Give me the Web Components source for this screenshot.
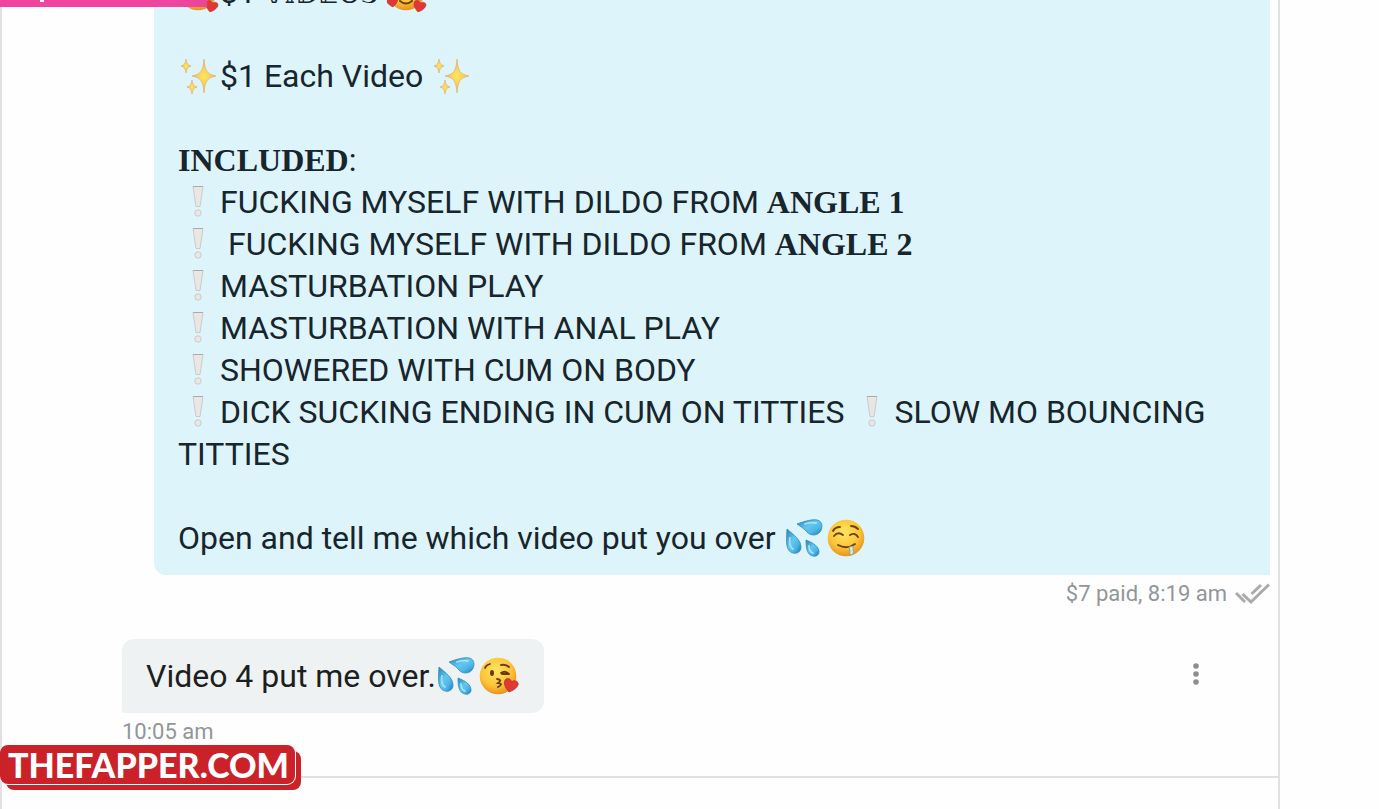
<!DOCTYPE html>
<html lang="en">
<head>
<meta charset="utf-8">
<title>Messages</title>
<style>
  body {
    margin: 0;
    background: #fefefe;
    color: #17252c;
    font-family: Roboto, "Liberation Sans", sans-serif;
  }
  .outgoing {
    margin-left: 152px;
  }
  .incoming {
    margin-left: 120px;
  }
  b {
    font-family: "Liberation Serif", serif;
    line-height: 1;
  }
  .outline {
    font-family: "DejaVu Sans", sans-serif;
    font-size: 28px;
    line-height: 1;
  }
</style>
</head>
<body>

<template id="chat-page">
  <style>
    :host {
      display: block;
      position: relative;
      height: 100vh;
      overflow: hidden;
    }
    .column {
      display: flex;
      flex-direction: column;
      box-sizing: border-box;
      height: 100%;
      margin-right: 99px;
      border: solid #dfe1e3;
      border-width: 0 2px 0 2px;
    }
    main {
      flex: 1;
      min-height: 0;
      display: flex;
      flex-direction: column;
      justify-content: flex-end;
      gap: 32px;
      padding: 0 8px 31px 0;
    }
    footer {
      height: 31px;
      flex: none;
      border-top: 2px solid #dfe1e3;
    }
  </style>
  <div class="column">
    <main><slot></slot></main>
    <footer></footer>
  </div>
  <slot name="over"></slot>
</template>

<template id="chat-message">
  <style>
    :host {
      display: flex;
      flex-direction: column;
      gap: 6px;
      flex: none;
    }
    .row {
      display: flex;
      align-items: center;
      justify-content: space-between;
    }
    .bubble {
      padding: 16px 24px;
      border-radius: 12px 12px 12px 2px;
      background: #eff2f3;
      color: #1c1f21;
      font-size: 32px;
      line-height: 42px;
      white-space: pre-wrap;
    }
    .meta {
      display: flex;
      align-items: center;
      gap: 8px;
      color: #919698;
      font-size: 22px;
      line-height: 26px;
    }
    :host([own]) .bubble {
      flex: 1;
      border-radius: 12px 12px 0 12px;
      background: #def4fb;
      color: inherit;
    }
    :host([own]) .meta {
      justify-content: flex-end;
    }
  </style>
  <div class="row">
    <div class="bubble"><slot></slot></div>
    <slot name="action"></slot>
  </div>
  <div class="meta"><slot name="meta"></slot></div>
</template>

<template id="read-ticks">
  <style>
    :host { display: block; height: 22px; }
    svg { display: block; }
  </style>
  <svg width="35" height="22" viewBox="0 0 35 22" fill="none" stroke="#a8aaab" stroke-width="3">
    <path d="M1 10l9 9M7.500 11l8.500 8L34 1.500M16.500 11L26 2"/>
  </svg>
</template>

<template id="more-button">
  <style>
    :host { display: block; margin-right: 54px; }
    button {
      display: block;
      padding: 4px 8px 8px;
      border: 0;
      background: none;
    }
    svg { display: block; }
  </style>
  <button type="button" aria-label="More">
    <svg width="24" height="24" viewBox="0 0 24 24" fill="#8e8e8e">
      <circle cx="12" cy="4" r="2.800"/><circle cx="12" cy="12" r="2.800"/><circle cx="12" cy="20" r="2.800"/>
    </svg>
  </button>
</template>

<template id="site-stamp">
  <style>
    :host {
      position: absolute;
      left: 0;
      bottom: 19px;
      padding: 0 6px 6px 0;
    }
    .back {
      position: absolute;
      inset: 6px 0 0 6px;
      border-radius: 8px;
      background: #cb2129;
    }
    .front {
      position: relative;
      padding: 0 6px 0 8px;
      border-radius: 8px;
      background: #cb2129;
      box-shadow: 0 0 0 1px #fff;
      color: #fff;
      font: 900 34px/39px Lato, sans-serif;
    }
  </style>
  <div class="back"></div>
  <div class="front"><slot></slot></div>
</template>

<template id="top-ribbon">
  <style>
    :host {
      position: absolute;
      top: 0;
      left: 0;
      width: 207px;
      height: 7px;
      background: linear-gradient(to right, #f0459f 85%, #e8459b);
    }
    i {
      display: block;
      width: 4px;
      height: 2px;
      margin-left: 40px;
      background: #fff;
    }
  </style>
  <i></i>
</template>

<template id="emoji-icon">
  <style>
    :host {
      display: inline-block;
      width: 40px;
      height: 40px;
      margin: 0 1px;
      vertical-align: -9px;
      white-space: normal;
      line-height: 0;
    }
    svg { display: block; }
  </style>
  <svg width="40" height="40" viewBox="0 0 40 40">
    <defs>
      <radialGradient id="skin" cx=".45" cy=".35" r=".65">
        <stop offset="0" stop-color="#ffe564"/><stop offset=".65" stop-color="#fbc437"/><stop offset="1" stop-color="#e79320"/>
      </radialGradient>
      <linearGradient id="water" x1="0" y1="0" x2="1" y2="1">
        <stop offset="0" stop-color="#2a83b5"/><stop offset=".45" stop-color="#62c8ee"/><stop offset=".7" stop-color="#4eb6e8"/><stop offset="1" stop-color="#1c78b5"/>
      </linearGradient>
      <radialGradient id="gold">
        <stop offset="0" stop-color="#ffe75c"/><stop offset="1" stop-color="#eeb968"/>
      </radialGradient>
    </defs>
    <g id="art"></g>
  </svg>
</template>

<script>
  const HEART = 'c-3-2-6-5-6-8 0-4 5-4 6-1 2-3 7-2 6 2-1 3-3 5-6 7z';
  const FACE = '<circle cx="19" cy="20" r="18.300" fill="url(#skin)"/>';
  const ART = {
    sparkles: `
      <g fill="url(#gold)" stroke="#dfa85d" stroke-width=".6">
        <path d="M25 3c1 12 3 15 12 17-9 2-11 5-12 17-1-12-3-15-12-17 9-2 11-5 12-17z"/>
        <path d="M7 3c.500 4 1.500 6 5 7-3.500 1-4.500 3-5 7-.500-4-1.500-6-5-7 3.500-1 4.500-3 5-7z"/>
        <path d="M13 24c.500 4 1.500 6 5 7-3.500 1-4.500 3-5 7-.500-4-1.500-6-5-7 3.500-1 4.500-3 5-7z"/>
      </g>`,
    mark: `
      <g fill="#e9e6e4" stroke="#c4c2c3" stroke-width=".8">
        <path d="M14 4.500h10l-3 20h-4z"/>
        <circle cx="19" cy="31" r="3.200"/>
      </g>
      <path d="M14 4.500h10" stroke="#aaa9ab"/>`,
    drops: `
      <g fill="url(#water)" stroke="#2d8fc0" stroke-width=".8">
        <path d="M12 6C20 3 28 1 32 2c6 1 6 8 3 12-3 4-10 4-13 0-2-3-6-5-10-8z"/>
        <path d="M2 11c7 6 14 11 14 18 0 5-4 7-8 6-7-2-7-9-6-24z"/>
        <path d="M21 22c8 3 13 7 13 12 0 3-3 5-6 4-6-1-7-8-7-16z"/>
      </g>
      <path d="M5 20c-1 5 0 9 3 11M24 28c0 4 1 6 4 7M20 6q6-2 11-1" fill="none" stroke="#a3e2f8" stroke-width="1.800" stroke-linecap="round"/>`,
    drool: FACE + `
      <g fill="none" stroke="#70420f" stroke-width="1.900" stroke-linecap="round">
        <path d="M6 13q2-4 7-4M24 8q4 0 7 3M7 18q4-5 9-1M23 17q5-3 8 2M11 27q9 5 17-1"/>
      </g>
      <path d="M22 29l4-1c0 4 1 6 0 8-2 2-4 0-3-3z" fill="#d3e8df" stroke="#769b98" stroke-width=".8"/>`,
    kiss: FACE + `
      <ellipse cx="13" cy="17" rx="2" ry="3" fill="#6a3b12"/>
      <g fill="none" stroke="#6a3b12" stroke-width="1.800" stroke-linecap="round">
        <path d="M6 12q1-3 5-4M22 9q5-1 8 2M22 17q4-3 8 1M23 18q4 0 6 0M18 23q6 1 1 4 6 1 0 4"/>
      </g>
      <path transform="translate(30 36) rotate(14) scale(1.150)" d="M0 0${HEART}" fill="#e13a34" stroke="#b7282b" stroke-width=".6"/>`,
    hearts: FACE + `
      <path d="M13 29q6 5 12 0" fill="none" stroke="#70420f" stroke-width="2" stroke-linecap="round"/>
      <g fill="#de3937" stroke="#b82c2d" stroke-width=".5">
        <path transform="translate(6 35) rotate(-8)" d="M0 0${HEART}"/>
        <path transform="translate(31 40) rotate(14)" d="M0 0${HEART}"/>
      </g>`
  };

  class BaseElement extends HTMLElement {
    constructor() {
      super();
      this.attachShadow({mode: 'open'});
      const tpl = document.getElementById(this.localName);
      this.shadowRoot.appendChild(document.importNode(tpl.content, true));
    }
  }

  class EmojiIcon extends BaseElement {
    static get observedAttributes() {
      return ['name'];
    }
    attributeChangedCallback(attr, oldValue, newValue) {
      this.shadowRoot.getElementById('art').innerHTML = ART[newValue] || '';
    }
  }

  customElements.define('emoji-icon', EmojiIcon);
  for (const name of ['chat-page', 'chat-message', 'read-ticks', 'more-button', 'site-stamp', 'top-ribbon']) {
    customElements.define(name, class extends BaseElement {});
  }
</script>

<chat-page>
  <chat-message class="outgoing" own><emoji-icon name="hearts"></emoji-icon>$1 <span class="outline">𝕍𝕀𝔻𝔼𝕆𝕊</span> <emoji-icon name="hearts"></emoji-icon>

<emoji-icon name="sparkles"></emoji-icon>$1 Each Video <emoji-icon name="sparkles"></emoji-icon>

<b>INCLUDED</b>:
<emoji-icon name="mark"></emoji-icon>FUCKING MYSELF WITH DILDO FROM <b>ANGLE 1</b>
<emoji-icon name="mark"></emoji-icon> FUCKING MYSELF WITH DILDO FROM <b>ANGLE 2</b>
<emoji-icon name="mark"></emoji-icon>MASTURBATION PLAY
<emoji-icon name="mark"></emoji-icon>MASTURBATION WITH ANAL PLAY
<emoji-icon name="mark"></emoji-icon>SHOWERED WITH CUM ON BODY
<emoji-icon name="mark"></emoji-icon>DICK SUCKING ENDING IN CUM ON TITTIES <emoji-icon name="mark"></emoji-icon>SLOW MO BOUNCING TITTIES

Open and tell me which video put you over <emoji-icon name="drops"></emoji-icon><emoji-icon name="drool"></emoji-icon><span slot="meta">$7 paid, 8:19 am</span><read-ticks slot="meta"></read-ticks></chat-message>
  <chat-message class="incoming">Video 4 put me over.<emoji-icon name="drops"></emoji-icon><emoji-icon name="kiss"></emoji-icon><more-button slot="action"></more-button><span slot="meta">10:05 am</span></chat-message>
  <top-ribbon slot="over"></top-ribbon>
  <site-stamp slot="over">THEFAPPER.COM</site-stamp>
</chat-page>

</body>
</html>
